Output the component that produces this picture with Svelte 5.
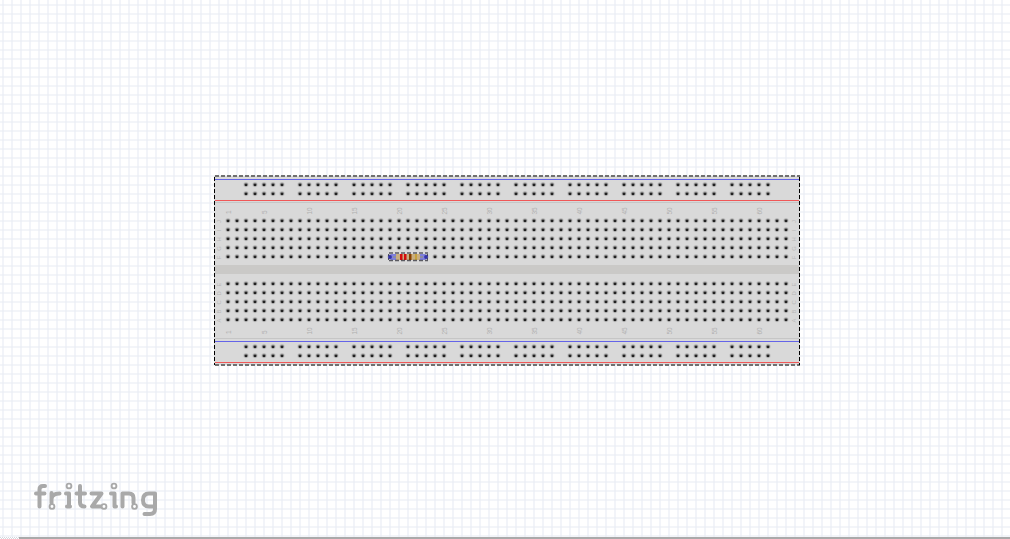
<script>
  const pitch = 9;
  const holes = [];
  for (let c = 0; c < 63; c++) {
    for (let r = 0; r < 5; r++) {
      holes.push([228 + c * pitch, 221 + r * pitch]);
      holes.push([228 + c * pitch, 284 + r * pitch]);
    }
  }
  for (let g = 0; g < 10; g++) {
    for (let c = 0; c < 5; c++) {
      for (const y of [185, 194, 347, 356]) holes.push([246 + g * 54 + c * pitch, y]);
    }
  }
  const cols = [1, 5, 10, 15, 20, 25, 30, 35, 40, 45, 50, 55, 60];
  const rows = [
    ['J', 221], ['I', 230], ['H', 239], ['G', 248], ['F', 257],
    ['E', 284], ['D', 293], ['C', 302], ['B', 311], ['A', 320]
  ];
</script>

<main>
  <svg class="sketch" width="1010" height="539" viewBox="0 0 1010 539">
    <defs>
      <pattern id="grid" x="2" y="4" width="9" height="9" patternUnits="userSpaceOnUse">
        <rect width="9" height="9" fill="#fff" />
        <rect width="2" height="9" fill="#e8ecf5" opacity=".58" />
        <rect width="9" height="2" fill="#e8ecf5" opacity=".52" />
      </pattern>
      <pattern id="checks" y="537" width="2" height="2" patternUnits="userSpaceOnUse">
        <rect width="2" height="2" fill="#fff" />
        <rect width="1" height="1" fill="#d4d8de" />
        <rect x="1" y="1" width="1" height="1" fill="#d4d8de" />
      </pattern>
      <g id="hole">
        <circle cy="-.4" r="2.7" fill="#c2c2c2" />
        <ellipse cy="-.6" rx="2" ry="1.6" fill="#848484" />
        <circle r="1.3" fill="#222" />
      </g>
    </defs>
    <rect width="1010" height="539" fill="url(#grid)" />

    <g shape-rendering="crispEdges">
      <rect x="214" y="176" width="586" height="189" fill="#d9d9d9" />
      <rect x="215" y="179" width="584" height="1" fill="#6464e8" />
      <rect x="215" y="200" width="584" height="1" fill="#f05858" />
      <rect x="215" y="202" width="584" height="1" fill="#c6c6c6" />
      <rect x="215" y="265" width="584" height="9" fill="#cac9c7" />
      <rect x="215" y="338" width="584" height="1" fill="#c6c6c6" />
      <rect x="215" y="341" width="584" height="1" fill="#6464e8" />
      <rect x="215" y="362" width="584" height="1" fill="#f05858" />
    </g>

    {#each holes as [x, y]}
      <use href="#hole" {x} {y} />
    {/each}

    <g class="labels">
      {#each cols as n}
        {#each [211, 331] as y}
          <text transform="translate({228 + (n - 1) * pitch + 2.6} {n < 10 ? y + 1.3 : y}) rotate(-90)">{n}</text>
        {/each}
      {/each}
      {#each rows as [name, y]}
        <text class="row" transform="translate(221.3 {y + 0.5}) rotate(-90)">{name}</text>
        <text class="row" transform="translate(796.3 {y + 0.5}) rotate(-90)">{name}</text>
      {/each}
    </g>

    <g class="resistor">
      <path d="M388 257L391 254H396L398 255H418L420 254H425L428 257L425 260H420L418 259H398L396 260H391Z" fill="#8080dc" />
      <path d="M396 254H420V260H396Z" fill="#c9ae80" />
      <rect x="400" y="254" width="2.5" height="6" fill="#d20d0d" />
      <rect x="404" y="254" width="2.5" height="6" fill="#d20d0d" />
      <rect x="409" y="254" width="2.5" height="6" fill="#884000" />
      <rect x="415" y="254" width="2" height="6" fill="#c5a13c" />
      <rect x="393" y="256" width="3" height="2" fill="#8c8ca0" />
      <rect x="420" y="256" width="3" height="2" fill="#8c8ca0" />
      <circle cx="390" cy="257" r="1.9" fill="#3333a8" />
      <circle cx="426" cy="257" r="1.9" fill="#3333a8" />
      <g fill="none" opacity=".75">
        <path d="M389 253H428M389 260.500H428" stroke="#30303a" stroke-width="1.500" stroke-dasharray="4 2" />
        <path d="M388.500 254V260M427.500 254V260" stroke="#24244a" stroke-dasharray="2 2" />
      </g>
    </g>

    <path d="M215 176H800M215 365H800" transform="translate(0 0)" fill="none" stroke="#707070" stroke-width="2" stroke-dasharray="4 2" />
    <path d="M214.500 177V365M799.500 177V365" stroke="#000" stroke-dasharray="4 2" />

    <g class="logo">
      <path d="M39.500 506.500V489.500Q39.500 486 43 486H45M36 493.500H44.500" />
      <path d="M51.500 493V503M51.500 499Q52 493.500 59.500 493.500" />
      <path d="M66 493.500H69V506.500M67 506.500H70" />
      <path d="M80 486V502.500Q80 506.500 84.500 506.500M76.500 493.500H85" />
      <path d="M91.500 493.500H101.500L92 506.500H101" />
      <path d="M111 493.500H114.500V506.500H116" />
      <path d="M122.500 506.500V493.500H129Q133.500 493.500 133.500 498V503" />
      <path d="M155 493.500H149Q143 493.500 143 500Q143 506.500 149 506.500H155M155 493.500V509Q155 514 150 514H144.500" />
      <g class="pads">
        <circle cx="52" cy="506.500" r="2.400" />
        <circle cx="69" cy="486" r="2.400" />
        <circle cx="104" cy="506.500" r="2.400" />
        <circle cx="114" cy="486" r="2.400" />
        <circle cx="134.500" cy="506.500" r="2.400" />
      </g>
    </g>
    <rect y="537" width="19" height="2" fill="url(#checks)" />
    <rect x="19" y="537" width="991" height="2" fill="#aaa" />
  </svg>
</main>

<style>
  :global(body) { margin: 0; overflow: hidden; }
  main { width: 1010px; height: 539px; background: #fff; }
  .sketch { display: block; }
  .labels text { font: 6.500px "Liberation Sans", sans-serif; fill: #b0b0b0; text-anchor: middle; }
  .labels .row { font-size: 5.800px; fill: #b8b8b8; }
  .logo { fill: none; stroke: #a9a9a9; stroke-width: 4; stroke-linecap: round; stroke-linejoin: round; }
  .pads { fill: #fff; stroke-width: 1.900; }
</style>
